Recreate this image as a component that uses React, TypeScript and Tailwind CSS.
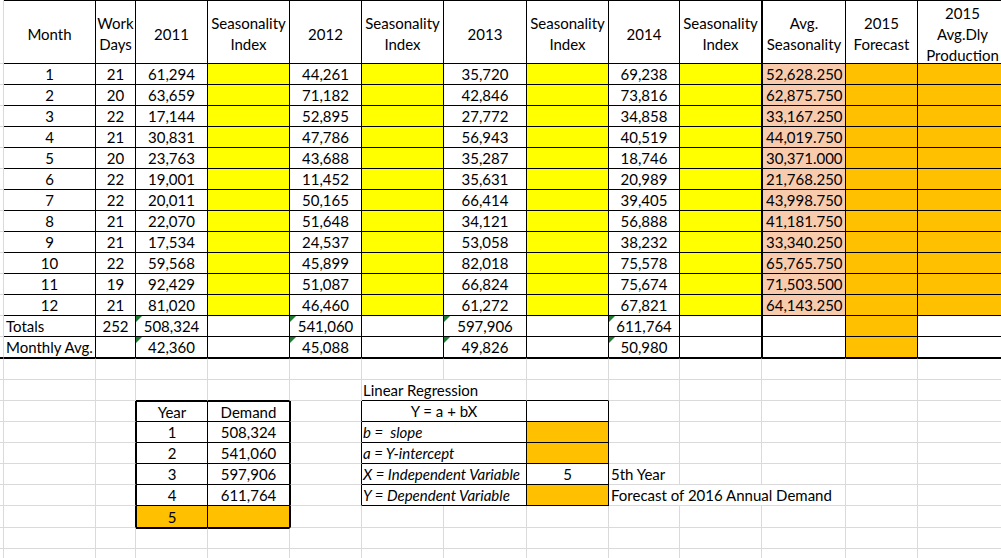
import React from "react";

// cell border presets: light gridline vs. black table border
const gray = "border-r border-b border-[#dadada]";
const black = "border-r border-b border-black";
const mid = "flex items-center justify-center";
const start = "flex items-center justify-start";

type Cell = { t?: React.ReactNode; k: string; span?: 2 | 3; tri?: boolean };

const monthly: string[][] = [
  ["1", "21", "61,294", "44,261", "35,720", "69,238", "52,628.250"],
  ["2", "20", "63,659", "71,182", "42,846", "73,816", "62,875.750"],
  ["3", "22", "17,144", "52,895", "27,772", "34,858", "33,167.250"],
  ["4", "21", "30,831", "47,786", "56,943", "40,519", "44,019.750"],
  ["5", "20", "23,763", "43,688", "35,287", "18,746", "30,371.000"],
  ["6", "22", "19,001", "11,452", "35,631", "20,989", "21,768.250"],
  ["7", "22", "20,011", "50,165", "66,414", "39,405", "43,998.750"],
  ["8", "21", "22,070", "51,648", "34,121", "56,888", "41,181.750"],
  ["9", "21", "17,534", "24,537", "53,058", "38,232", "33,340.250"],
  ["10", "22", "59,568", "45,899", "82,018", "75,578", "65,765.750"],
  ["11", "19", "92,429", "51,087", "66,824", "75,674", "71,503.500"],
  ["12", "21", "81,020", "46,460", "61,272", "67,821", "64,143.250"],
];

const headers = [
  "Month",
  "Work\nDays",
  "2011",
  "Seasonality\nIndex",
  "2012",
  "Seasonality\nIndex",
  "2013",
  "Seasonality\nIndex",
  "2014",
  "Seasonality\nIndex",
  "Avg.\nSeasonality",
  "2015\nForecast",
  "2015\nAvg.Dly\nProduction",
];

const yearTable = [
  ["1", "508,324", "b =  slope", ""],
  ["2", "541,060", "a = Y-intercept", ""],
  ["3", "597,906", "X = Independent Variable", "5"],
  ["4", "611,764", "Y = Dependent Variable", ""],
];

function grayRun(n: number, extra = ""): Cell[] {
  return Array.from({ length: n }, () => ({ k: `${gray} ${extra}` }));
}

function buildRows(): Cell[][] {
  const rows: Cell[][] = [];

  rows.push([
    { k: gray },
    ...headers.map((t, i) => ({
      t,
      k: `${black} border-t ${mid} whitespace-pre-line text-center leading-[21px] pt-1 ${i === 10 ? "border-l" : ""}`,
    })),
  ]);

  monthly.forEach(([m, d, a, b, c, e, avg]) => {
    rows.push([
      { k: gray },
      { t: m, k: `${black} ${mid}` },
      { t: d, k: `${black} ${mid}` },
      { t: a, k: `${black} ${mid}` },
      { k: `${black} bg-[#ffff00]` },
      { t: b, k: `${black} ${mid}` },
      { k: `${black} bg-[#ffff00]` },
      { t: c, k: `${black} ${mid}` },
      { k: `${black} bg-[#ffff00]` },
      { t: e, k: `${black} ${mid}` },
      { k: `${black} bg-[#ffff00]` },
      { t: avg, k: `${black} border-l ${start} pl-[3px] bg-[#f8cbad]` },
      { k: `${black} bg-[#ffc000]` },
      { k: `${black} bg-[#ffc000]` },
    ]);
  });

  const summary = (label: string, days: string, v: string[], last: boolean): Cell[] => [
    { k: last ? `${gray} border-b-black` : gray },
    { t: label, k: `${black} ${start} pl-[2px] whitespace-nowrap` },
    { t: days, k: `${black} ${mid}` },
    { t: v[0], k: `${black} ${mid} relative`, tri: true },
    { k: black },
    { t: v[1], k: `${black} ${mid} relative`, tri: true },
    { k: black },
    { t: v[2], k: `${black} ${mid} relative`, tri: true },
    { k: black },
    { t: v[3], k: `${black} ${mid} relative`, tri: true },
    { k: black },
    { k: `${black} border-l` },
    { k: `${black} bg-[#ffc000]` },
    { k: black },
  ];
  rows.push(summary("Totals", "252", ["508,324", "541,060", "597,906", "611,764"], false));
  rows.push(summary("Monthly Avg.", "", ["42,360", "45,088", "49,826", "50,980"], true));

  // thick rule under the table
  rows.push(grayRun(14, "border-t border-t-black"));

  rows.push([
    ...grayRun(3),
    { k: `${gray} border-b-black` },
    { k: `${gray} border-b-black` },
    { k: gray },
    { t: "Linear Regression", span: 2, k: `${gray} border-b-black ${start} pl-[1px] whitespace-nowrap` },
    { k: `${gray} border-b-black` },
    ...grayRun(5),
  ]);

  rows.push([
    ...grayRun(2),
    { k: `${gray} border-r-black` },
    { t: "Year", k: `${black} border-t border-l ${mid}` },
    { t: "Demand", k: `${black} border-t ${mid}` },
    { k: `${gray} border-l border-l-black border-r-black` },
    { t: "Y = a + bX", span: 2, k: `${black} ${mid}` },
    { k: black },
    ...grayRun(5),
  ]);

  yearTable.forEach(([y, dem, label, val], i) => {
    const tail: Cell[] =
      i === 2
        ? [{ t: "5th Year", k: `${gray} ${start} pl-[2px] whitespace-nowrap` }, ...grayRun(4)]
        : i === 3
        ? [
            { t: "Forecast of 2016 Annual Demand", span: 3, k: `${gray} ${start} pl-[2px] whitespace-nowrap` },
            ...grayRun(2),
          ]
        : grayRun(5);
    rows.push([
      ...grayRun(2),
      { k: `${gray} border-r-black` },
      { t: y, k: `${black} border-l ${mid}` },
      { t: dem, k: `${black} ${mid}` },
      { k: `${gray} border-l border-l-black border-r-black` },
      {
        t: label,
        span: 2,
        k: `${black} ${start} pl-[1px] italic overflow-hidden whitespace-pre`,
      },
      { t: val, k: val ? `${black} ${mid}` : `${black} bg-[#ffc000]` },
      ...tail,
    ]);
  });

  rows.push([
    ...grayRun(2),
    { k: `${gray} border-r-black` },
    { t: "5", k: `${black} border-l ${mid} bg-[#ffc000]` },
    { k: `${black} bg-[#ffc000]` },
    { k: `${gray} border-l border-l-black` },
    ...grayRun(8),
  ]);

  rows.push([
    ...grayRun(3),
    { k: `${gray} border-t border-t-black` },
    { k: `${gray} border-t border-t-black` },
    ...grayRun(9),
  ]);
  rows.push(grayRun(14));
  rows.push(grayRun(14));

  return rows;
}

function ErrorMark() {
  return (
    <svg className="absolute left-0 top-0" width="6" height="6" viewBox="0 0 6 6">
      <polygon points="0,0 6,0 0,6" fill="#1e7b32" />
    </svg>
  );
}

export default function App() {
  const rows = buildRows();
  return (
    <div className="w-[1001px] h-[558px] overflow-hidden bg-white text-black font-['Lato',sans-serif] text-[15px] leading-[20px]">
      <div className="grid grid-cols-[4px_92px_40px_72px_82px_72px_82px_83px_82px_71px_82px_84px_72px_90px] grid-rows-[64px_repeat(14,21px)_22px_repeat(6,21px)_22px_repeat(3,21px)]">
        {rows.flatMap((row, r) =>
          row.map((cell, c) => (
            <div
              key={`${r}-${c}`}
              className={`${cell.k} ${cell.span === 2 ? "col-span-2" : ""} ${cell.span === 3 ? "col-span-3" : ""}`}
            >
              {cell.tri && <ErrorMark />}
              {cell.t}
            </div>
          ))
        )}
      </div>
    </div>
  );
}
